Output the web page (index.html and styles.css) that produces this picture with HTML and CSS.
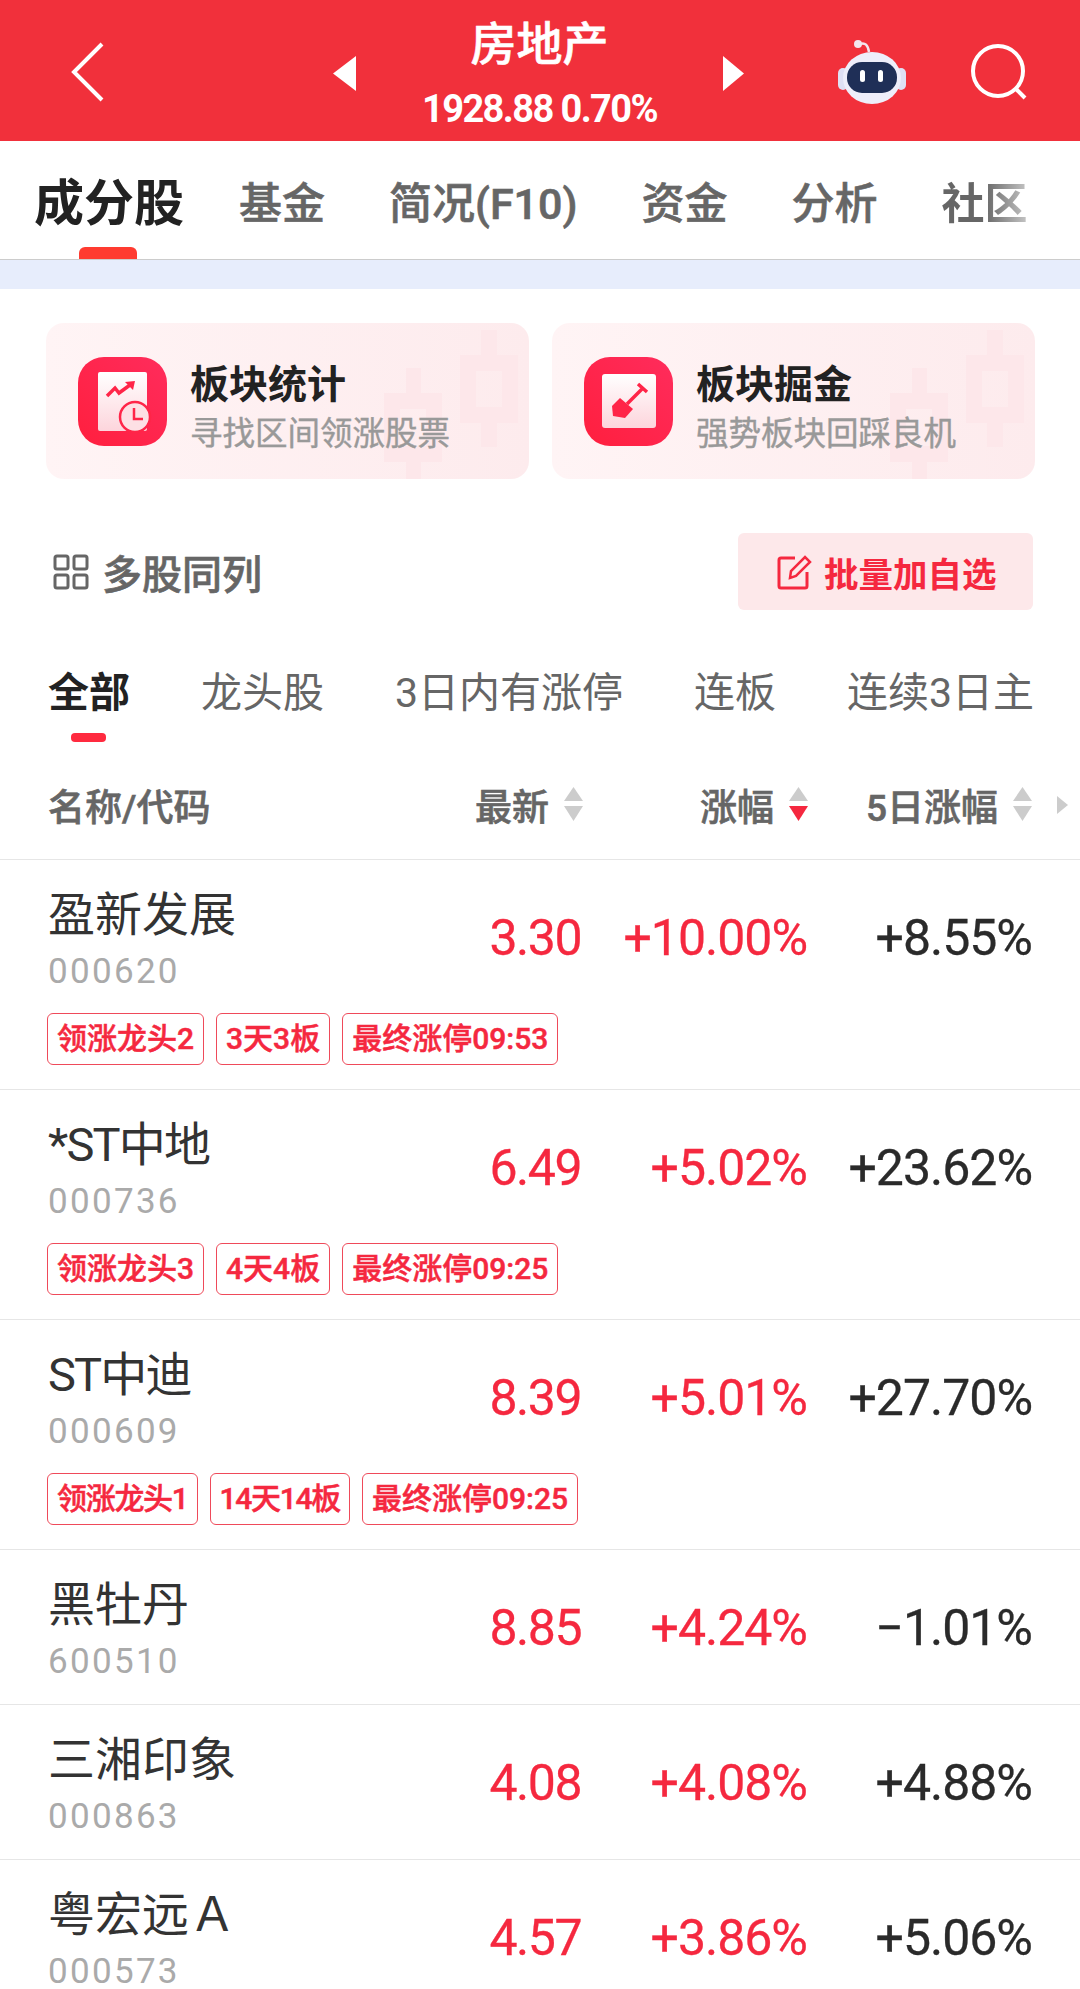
FILE: index.html
```html
<!DOCTYPE html>
<html lang="zh-CN">
<head>
    <meta charset="utf-8">
    <title>房地产</title>
    <link rel="stylesheet" href="styles.css">
</head>
<body>
    <!-- 顶部红色标题栏 -->
    <div class="topbar">
        <svg class="back" width="34" height="60" viewBox="0 0 34 60"><path d="M31 2 L3 30 L31 58" fill="none" stroke="#fff" stroke-width="4"/></svg>
        <svg class="tri-left" width="23" height="35" viewBox="0 0 23 35"><path d="M23 0 V35 L0 17.5 Z" fill="#fff"/></svg>
        <div class="topbar-title">
            <div class="topbar-name">房地产</div>
            <div class="topbar-price">1928.88 0.70%</div>
        </div>
        <svg class="tri-right" width="21" height="35" viewBox="0 0 21 35"><path d="M0 0 V35 L21 17.5 Z" fill="#fff"/></svg>
        <svg class="robot" width="68" height="66" viewBox="0 0 68 66">
            <path d="M22 5 C27 3 30 6 31 13" fill="none" stroke="#f3e6ee" stroke-width="2.5"/>
            <circle cx="20" cy="5" r="4" fill="#f3e6ee"/>
            <rect x="0" y="29" width="10" height="22" rx="5" fill="#dfe0f4"/>
            <rect x="58" y="29" width="10" height="22" rx="5" fill="#dfe0f4"/>
            <ellipse cx="34" cy="39" rx="29" ry="26" fill="#eeeefa"/>
            <rect x="9" y="23" width="50" height="31" rx="15" fill="#1f2f57"/>
            <rect x="22" y="31" width="5" height="12" rx="2.5" fill="#fff"/>
            <rect x="40" y="31" width="5" height="12" rx="2.5" fill="#fff"/>
        </svg>
        <svg class="search" width="56" height="58" viewBox="0 0 56 58">
            <circle cx="27" cy="27" r="25" fill="none" stroke="#fff" stroke-width="4"/>
            <path d="M45 45 L54 54" stroke="#fff" stroke-width="4"/>
        </svg>
    </div>

    <!-- 一级标签 -->
    <div class="tabs">
        <a class="tab tab-active">成分股</a>
        <a class="tab">基金</a>
        <a class="tab">简况(F10)</a>
        <a class="tab">资金</a>
        <a class="tab">分析</a>
        <a class="tab tab-fade">社区</a>
    </div>
    <div class="band"></div>

    <!-- 功能卡片 -->
    <div class="cards">
        <div class="card">
            <svg class="candles" width="483" height="156" viewBox="0 0 483 156">
                <path d="M435 7 H451 V32 H472 V100 H451 V124 H435 V100 H414 V32 H435 Z M430 48 V84 H456 V48 Z" fill="#fde7ea" fill-rule="evenodd"/>
                <path d="M360 45 H375 V70 H396 V139 H375 V156 H360 V139 H338 V70 H360 Z M354 86 V123 H380 V86 Z" fill="#fde7ea" fill-rule="evenodd"/>
            </svg>
            <svg class="card-icon" width="89" height="89" viewBox="0 0 89 89">
                <defs>
                    <linearGradient id="redA" x1="0" y1="1" x2="1" y2="0"><stop offset="0" stop-color="#ff1f3e"/><stop offset="1" stop-color="#ff2c5c"/></linearGradient>
                    <linearGradient id="paperA" x1="0" y1="0" x2="0" y2="1"><stop offset="0" stop-color="#fff"/><stop offset="1" stop-color="#fdd5dc"/></linearGradient>
                </defs>
                <rect width="89" height="89" rx="26" fill="url(#redA)"/>
                <rect x="20" y="15" width="49" height="59" rx="2" fill="url(#paperA)"/>
                <path d="M29 39 L37 31 L41 36 L52 28" fill="none" stroke="#ff2548" stroke-width="3.5"/>
                <path d="M47 25 L57 24 L55 33 Z" fill="#ff2548"/>
                <circle cx="57" cy="60" r="15" fill="#fde0e4" stroke="#ff2548" stroke-width="2.5"/>
                <path d="M56 51 V62 H65" fill="none" stroke="#ff2548" stroke-width="2.5"/>
            </svg>
            <div class="card-text">
                <div class="card-title">板块统计</div>
                <div class="card-sub">寻找区间领涨股票</div>
            </div>
        </div>
        <div class="card">
            <svg class="candles" width="483" height="156" viewBox="0 0 483 156">
                <path d="M435 7 H451 V32 H472 V100 H451 V124 H435 V100 H414 V32 H435 Z M430 48 V84 H456 V48 Z" fill="#fde7ea" fill-rule="evenodd"/>
                <path d="M360 45 H375 V70 H396 V139 H375 V156 H360 V139 H338 V70 H360 Z M354 86 V123 H380 V86 Z" fill="#fde7ea" fill-rule="evenodd"/>
            </svg>
            <svg class="card-icon" width="89" height="89" viewBox="0 0 89 89">
                <rect width="89" height="89" rx="26" fill="url(#redA)"/>
                <rect x="18" y="17" width="54" height="54" rx="3" fill="url(#paperA)"/>
                <path d="M54 27 L63 35 M59 31 L43 47" fill="none" stroke="#ff2548" stroke-width="3.5"/>
                <path d="M36 41 L49 52 L41 61 L29 59 L28 49 Z" fill="#ff2548"/>
            </svg>
            <div class="card-text">
                <div class="card-title">板块掘金</div>
                <div class="card-sub">强势板块回踩良机</div>
            </div>
        </div>
    </div>

    <!-- 多股同列 / 批量加自选 -->
    <div class="tools">
        <div class="multi">
            <svg width="36" height="36" viewBox="0 0 36 36" fill="none" stroke="#666" stroke-width="3">
                <rect x="2" y="2" width="13" height="13" rx="2"/>
                <rect x="21" y="2" width="13" height="13" rx="2"/>
                <rect x="2" y="21" width="13" height="13" rx="2"/>
                <rect x="21" y="21" width="13" height="13" rx="2"/>
            </svg>
            <span>多股同列</span>
        </div>
        <div class="batch">
            <svg width="36" height="36" viewBox="0 0 36 36" fill="none" stroke="#f5283f" stroke-width="3">
                <path d="M18 4 H4 Q2 4 2 6 V32 Q2 34 4 34 H28 Q30 34 30 32 V18"/>
                <path d="M13 24 L14 17 L28 3 L33 8 L19 22 Z" stroke-width="2.5"/>
            </svg>
            <span>批量加自选</span>
        </div>
    </div>

    <!-- 二级标签 -->
    <div class="subtabs">
        <a class="subtab subtab-active">全部</a>
        <a class="subtab">龙头股</a>
        <a class="subtab">3日内有涨停</a>
        <a class="subtab">连板</a>
        <a class="subtab">连续3日主</a>
    </div>

    <!-- 表头 -->
    <div class="thead">
        <div class="th-name">名称/代码</div>
        <div class="th th-last">最新<svg class="sort" width="21" height="35" viewBox="0 0 21 35"><path d="M10.5 0 L20 14 H1 Z" fill="#ccc"/><path d="M10.5 34 L20 19 H1 Z" fill="#ccc"/></svg></div>
        <div class="th th-pct">涨幅<svg class="sort" width="21" height="35" viewBox="0 0 21 35"><path d="M10.5 0 L20 14 H1 Z" fill="#ccc"/><path d="M10.5 34 L20 19 H1 Z" fill="#f5283f"/></svg></div>
        <div class="th th-five">5日涨幅<svg class="sort" width="21" height="35" viewBox="0 0 21 35"><path d="M10.5 0 L20 14 H1 Z" fill="#ccc"/><path d="M10.5 34 L20 19 H1 Z" fill="#ccc"/></svg></div>
        <svg class="th-more" width="11" height="18" viewBox="0 0 11 18"><path d="M0 0 L11 9 L0 18 Z" fill="#ccc"/></svg>
    </div>

    <!-- 成分股列表 -->
    <div class="row">
        <div class="row-main">
            <div class="stock"><div class="stock-name">盈新发展</div><div class="stock-code">000620</div></div>
            <div class="val val-last up">3.30</div>
            <div class="val val-pct up">+10.00%</div>
            <div class="val val-five">+8.55%</div>
        </div>
        <div class="tags"><span class="tag">领涨龙头2</span><span class="tag">3天3板</span><span class="tag">最终涨停09:53</span></div>
    </div>
    <div class="row">
        <div class="row-main">
            <div class="stock"><div class="stock-name name-tight">*ST中地</div><div class="stock-code">000736</div></div>
            <div class="val val-last up">6.49</div>
            <div class="val val-pct up">+5.02%</div>
            <div class="val val-five">+23.62%</div>
        </div>
        <div class="tags"><span class="tag">领涨龙头3</span><span class="tag">4天4板</span><span class="tag">最终涨停09:25</span></div>
    </div>
    <div class="row">
        <div class="row-main">
            <div class="stock"><div class="stock-name name-tight">ST中迪</div><div class="stock-code">000609</div></div>
            <div class="val val-last up">8.39</div>
            <div class="val val-pct up">+5.01%</div>
            <div class="val val-five">+27.70%</div>
        </div>
        <div class="tags"><span class="tag tag-tight">领涨龙头1</span><span class="tag tag-tight">14天14板</span><span class="tag">最终涨停09:25</span></div>
    </div>
    <div class="row row-short">
        <div class="row-main">
            <div class="stock"><div class="stock-name">黑牡丹</div><div class="stock-code">600510</div></div>
            <div class="val val-last up">8.85</div>
            <div class="val val-pct up">+4.24%</div>
            <div class="val val-five">−1.01%</div>
        </div>
    </div>
    <div class="row row-short">
        <div class="row-main">
            <div class="stock"><div class="stock-name">三湘印象</div><div class="stock-code">000863</div></div>
            <div class="val val-last up">4.08</div>
            <div class="val val-pct up">+4.08%</div>
            <div class="val val-five">+4.88%</div>
        </div>
    </div>
    <div class="row row-short">
        <div class="row-main">
            <div class="stock"><div class="stock-name">粤宏远Ａ</div><div class="stock-code">000573</div></div>
            <div class="val val-last up">4.57</div>
            <div class="val val-pct up">+3.86%</div>
            <div class="val val-five">+5.06%</div>
        </div>
    </div>
</body>
</html>
```

FILE: styles.css
```css
* {
    margin: 0;
    padding: 0;
    box-sizing: border-box;
}
html, body {
    height: 1989px;
    overflow: hidden;
}
body {
    background: #fff;
    color: #222;
    font-family: "Roboto", "Noto Sans CJK SC", sans-serif;
}
svg {
    display: block;
    flex: none;
}

/* 顶部红色标题栏 */
.topbar {
    height: 141px;
    background: #f1303b;
    display: flex;
    align-items: center;
    color: #fff;
}
.back {
    margin: 2px 0 0 71px;
}
.tri-left {
    margin: 5px 0 0 228px;
}
.topbar-title {
    width: 367px;
    padding-top: 9px;
    text-align: center;
}
.topbar-name {
    font-size: 46px;
    line-height: 52px;
    font-weight: 500;
    -webkit-text-stroke: 0.6px #fff;
    margin-bottom: 15px;
}
.topbar-price {
    font-size: 38px;
    line-height: 48px;
    font-weight: 700;
    letter-spacing: -1.6px;
}
.tri-right {
    margin: 5px 0 0 0;
}
.robot {
    margin: 2px 0 0 94px;
}
.search {
    margin: 4px 0 0 65px;
}

/* 一级标签 */
.tabs {
    height: 119px;
    display: flex;
    align-items: center;
    padding: 8px 0 0 34px;
    gap: 64px;
    border-bottom: 1px solid #ccc;
}
.tab {
    position: relative;
    font-size: 43px;
    line-height: 56px;
    font-weight: 500;
    color: #666;
    -webkit-text-stroke: 0.6px #666;
}
.tab-active {
    font-size: 50px;
    font-weight: 700;
    color: #222;
    -webkit-text-stroke: 0;
    margin-right: -9px;
}
.tab-active::after {
    content: "";
    position: absolute;
    left: 45px;
    bottom: -27px;
    width: 58px;
    height: 12px;
    border-radius: 6px 6px 0 0;
    background: #ff3b30;
}
.tab-fade {
    background: linear-gradient(90deg, #666 50%, #c4c4c4);
    -webkit-background-clip: text;
    background-clip: text;
    color: transparent;
    -webkit-text-stroke: 0;
    font-weight: 700;
}
.band {
    height: 29px;
    background: #e7edfc;
}

/* 功能卡片 */
.cards {
    display: flex;
    gap: 23px;
    padding: 34px 45px 0 46px;
}
.card {
    position: relative;
    flex: 1;
    height: 156px;
    border-radius: 18px;
    overflow: hidden;
    background: linear-gradient(90deg, #fff4f5, #fdebed);
    display: flex;
    align-items: center;
    padding-left: 32px;
}
.candles {
    position: absolute;
    left: 0;
    top: 0;
}
.card-icon {
    position: relative;
}
.card-text {
    position: relative;
    margin-left: 23px;
    padding-top: 16px;
}
.card-title {
    font-size: 39px;
    line-height: 50px;
    font-weight: 700;
    color: #222;
}
.card-sub {
    font-size: 32.5px;
    line-height: 48px;
    color: #999;
    -webkit-text-stroke: 0.4px #999;
    white-space: nowrap;
}

/* 多股同列 / 批量加自选 */
.tools {
    display: flex;
    justify-content: space-between;
    align-items: center;
    padding: 54px 47px 0 53px;
}
.multi {
    display: flex;
    align-items: center;
    gap: 13px;
    font-size: 40px;
    font-weight: 500;
    color: #666;
    -webkit-text-stroke: 0.6px #666;
}
.batch {
    width: 295px;
    height: 77px;
    border-radius: 6px;
    background: #fde8ea;
    display: flex;
    align-items: center;
    gap: 11px;
    padding-left: 39px;
    font-size: 34.5px;
    font-weight: 700;
    color: #f5283f;
}

/* 二级标签 */
.subtabs {
    display: flex;
    gap: 71px;
    padding: 55px 0 0 48px;
    height: 148px;
    white-space: nowrap;
}
.subtab {
    position: relative;
    font-size: 41px;
    line-height: 56px;
    color: #666;
    height: 56px;
}
.subtab-active {
    font-weight: 700;
    color: #222;
}
.subtab-active::after {
    content: "";
    position: absolute;
    left: 23px;
    top: 68px;
    width: 35px;
    height: 9px;
    border-radius: 4px;
    background: #ff2a3f;
}

/* 表头 */
.thead {
    height: 102px;
    display: flex;
    align-items: center;
    padding: 0 14px 8px 48px;
    border-bottom: 1px solid #e6e6e6;
    color: #666;
    font-size: 37px;
    font-weight: 500;
    white-space: nowrap;
    -webkit-text-stroke: 0.6px #666;
}
.th-name {
    width: 427px;
    flex: none;
}
.th {
    display: flex;
    align-items: center;
    gap: 14px;
    flex: none;
}
.th-pct {
    margin-left: 116px;
}
.th-five {
    margin-left: 57px;
}
.th-more {
    margin-left: 24px;
}

/* 成分股列表 */
.row {
    padding: 27px 48px 24px;
    border-bottom: 1px solid #e6e6e6;
}
.row-short {
    padding-bottom: 23px;
}
.row-main {
    display: flex;
    align-items: center;
}
.stock {
    flex: 1;
}
.stock-name {
    font-size: 47px;
    line-height: 56px;
    color: #333;
}
.name-tight {
    letter-spacing: -1.8px;
}
.stock-code {
    font-size: 35px;
    line-height: 38px;
    margin-top: 10px;
    color: #aaa;
    letter-spacing: 2.3px;
}
.val {
    text-align: right;
    font-size: 50px;
    padding-bottom: 3px;
    color: #2a2a2a;
    letter-spacing: -1px;
    -webkit-text-stroke: 0.3px #2a2a2a;
}
.val-last {
    width: 200px;
    letter-spacing: -1.5px;
}
.val-pct {
    width: 226px;
}
.val-five {
    width: 225px;
}
.up {
    color: #f5283f;
    -webkit-text-stroke: 0.3px #f5283f;
}
.tags {
    display: flex;
    gap: 12px;
    margin: 22px 0 0 -1px;
}
.tag {
    height: 52px;
    padding: 0 9px;
    border: 1px solid #ef4a5a;
    border-radius: 6px;
    font-size: 30px;
    line-height: 50px;
    font-weight: 500;
    color: #f5283f;
    -webkit-text-stroke: 0.5px #f5283f;
}
.tag-tight {
    letter-spacing: -1.3px;
}
```
